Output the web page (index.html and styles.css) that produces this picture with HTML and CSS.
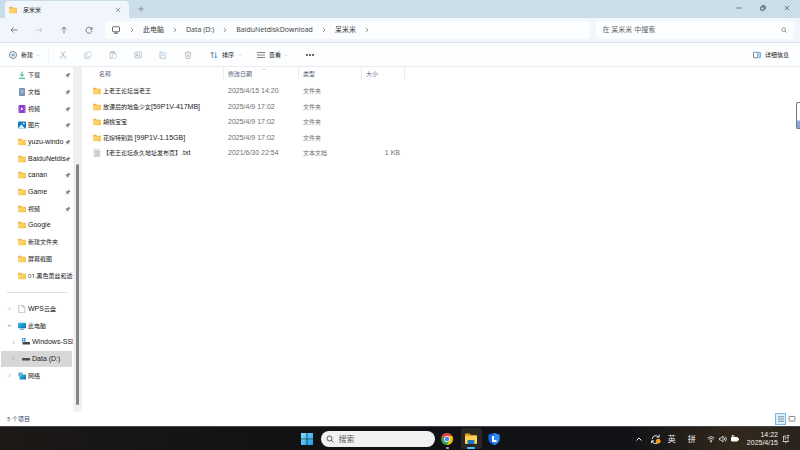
FILE: index.html
```html
<!DOCTYPE html>
<html lang="zh-CN">
<head>
<meta charset="utf-8">
<meta name="viewport" content="width=device-width, initial-scale=1">
<title>呆米米</title>
<link rel="stylesheet" href="styles.css">
</head>
<body>
<svg class="defs" aria-hidden="true">
  <defs>
    <linearGradient id="gFolder" x1="0" y1="0" x2="1" y2="1"><stop offset="0" stop-color="#ffdf83"/><stop offset="1" stop-color="#f6c244"/></linearGradient>
    <linearGradient id="gScreen" x1="0" y1="0" x2="1" y2="1"><stop offset="0" stop-color="#35c3e6"/><stop offset="1" stop-color="#0b6fb0"/></linearGradient>
    <linearGradient id="gWin" x1="0" y1="0" x2="1" y2="1"><stop offset="0" stop-color="#7fe0fb"/><stop offset="1" stop-color="#1c9bea"/></linearGradient>
  </defs>
  <symbol id="folder" viewBox="0 0 16 16"><path d="M0 3Q0 1.500 1.500 1.500H6l2 2h6.500q1.500 0 1.500 1.500V8H0z" fill="#eeb540"/><rect x="0" y="5" width="16" height="9.500" rx="1.200" fill="url(#gFolder)"/></symbol>
  <symbol id="pin" viewBox="0 0 16 16"><path d="M9.500 1.500l5 5-1.500 1-1 .2-2.300 2.300-.2 3-1.500 1.500-3-3L1.500 15 1 14.500l3.500-3.800-3-3L3 6.200l3-.2 2.300-2.300.2-1z" fill="#7d8389"/></symbol>
  <symbol id="chev" viewBox="0 0 16 16"><path d="M5.500 3l5 5-5 5" class="line"/></symbol>
  <symbol id="down" viewBox="0 0 16 16"><path d="M3 6l5 5 5-5" class="line"/></symbol>
  <symbol id="search" viewBox="0 0 16 16"><circle cx="7" cy="7" r="5" class="line"/><path d="M10.700 10.700L15 15" class="line"/></symbol>
  <symbol id="close" viewBox="0 0 16 16"><path d="M2 2l12 12M14 2L2 14" class="line"/></symbol>
</svg>

<div class="window">
  <header class="tabs">
    <div class="tab">
      <svg class="icon"><use href="#folder"/></svg>
      <span class="tab-title">呆米米</span>
      <button class="bare" aria-label="关闭标签页"><svg class="icon-s"><use href="#close"/></svg></button>
    </div>
    <button class="bare add" aria-label="新建标签页"><svg class="icon-s" viewBox="0 0 16 16"><path d="M8 1v14M1 8h14" class="line"/></svg></button>
    <div class="caption">
      <button class="bare" aria-label="最小化"><svg class="icon-s" viewBox="0 0 16 16"><path d="M1 8h14" class="line"/></svg></button>
      <button class="bare" aria-label="还原"><svg class="icon-s" viewBox="0 0 16 16"><rect x="2" y="5" width="9" height="9" rx="1" class="line bold"/><path d="M5 2h6q3 0 3 3v6" class="line bold"/></svg></button>
      <button class="bare" aria-label="关闭"><svg class="icon-s"><use href="#close"/></svg></button>
    </div>
  </header>

  <nav class="navbar">
    <div class="history">
      <button class="bare" aria-label="后退"><svg class="icon" viewBox="0 0 16 16"><path d="M15 8H2M7 3L2 8l5 5" class="line"/></svg></button>
      <button class="bare faint" aria-label="前进"><svg class="icon" viewBox="0 0 16 16"><path d="M1 8h13M9 3l5 5-5 5" class="line"/></svg></button>
      <button class="bare" aria-label="向上"><svg class="icon" viewBox="0 0 16 16"><path d="M8 15V2M3 7l5-5 5 5" class="line"/></svg></button>
      <button class="bare" aria-label="刷新"><svg class="icon" viewBox="0 0 16 16"><path d="M13.500 6A6 6 0 1 0 14 9M14 2v4.500H9.500" class="line"/></svg></button>
    </div>
    <div class="address">
      <svg class="icon monitor" viewBox="0 0 16 16"><rect x="1" y="1.500" width="14" height="10" rx="1.500" class="line"/><path d="M8 12v2.500M4 14.500h8" class="line"/></svg>
      <svg class="icon-s"><use href="#chev"/></svg>
      <a href="#pc">此电脑</a>
      <svg class="icon-s"><use href="#chev"/></svg>
      <a href="#d">Data (D:)</a>
      <svg class="icon-s"><use href="#chev"/></svg>
      <a href="#bd">BaiduNetdiskDownload</a>
      <svg class="icon-s"><use href="#chev"/></svg>
      <a href="#here">呆米米</a>
      <svg class="icon-s"><use href="#chev"/></svg>
    </div>
    <label class="find">
      <input type="text" placeholder="在 呆米米 中搜索" aria-label="在 呆米米 中搜索">
      <svg class="icon-s"><use href="#search"/></svg>
    </label>
  </nav>

  <div class="toolbar">
    <button class="tool new"><svg class="icon" viewBox="0 0 16 16"><circle cx="8" cy="8" r="7" class="line"/><path d="M8 4v8M4 8h8" class="line blue"/></svg>新建<svg class="caret"><use href="#down"/></svg></button>
    <div class="edits">
      <button class="bare" aria-label="剪切"><svg class="icon" viewBox="0 0 16 16"><path d="M4 1l6.500 10M12 1L5.500 11" class="line"/><circle cx="4" cy="12.500" r="2.200" class="line blue"/><circle cx="12" cy="12.500" r="2.200" class="line blue"/></svg></button>
      <button class="bare" aria-label="复制"><svg class="icon" viewBox="0 0 16 16"><rect x="5.500" y="1.500" width="9" height="10" rx="1.500" class="line blue"/><path d="M5 4.500H2.500q-1 0-1 1v8q0 1 1 1h7q1 0 1-1V12" class="line"/></svg></button>
      <button class="bare" aria-label="粘贴"><svg class="icon" viewBox="0 0 16 16"><path d="M6 14.500H2.500v-12h10V6M5 1h5v3H5z" class="line"/><rect x="7" y="6.500" width="7.500" height="8.500" rx="1" class="line blue"/></svg></button>
      <button class="bare" aria-label="重命名"><svg class="icon" viewBox="0 0 16 16"><path d="M9 2.500H2.500q-1 0-1 1v9q0 1 1 1H9M13 2.500h1.500v11H13M4 11l2.500-6L9 11M5 9h3" class="line"/><path d="M11 1v14M9.500 1h3M9.500 15h3" class="line blue"/></svg></button>
      <button class="bare" aria-label="共享"><svg class="icon" viewBox="0 0 16 16"><path d="M7 2.500H2v12h11V11" class="line"/><path d="M10 1.500l5 4.500-5 4V7.500Q6 7.500 5 11q0-6 5-6.500z" class="line blue"/></svg></button>
      <button class="bare" aria-label="删除"><svg class="icon" viewBox="0 0 16 16"><path d="M1.500 3.500h13M6 3V1.500h4V3M3 4l1 11h8l1-11M6.500 7v5M9.500 7v5" class="line"/></svg></button>
    </div>
    <button class="tool sort"><svg class="icon" viewBox="0 0 16 16"><path d="M4.500 14V2M1.500 5l3-3 3 3" class="line"/><path d="M11.500 2v12M8.500 11l3 3 3-3" class="line blue"/></svg>排序<svg class="caret"><use href="#down"/></svg></button>
    <button class="tool view"><svg class="icon" viewBox="0 0 16 16"><path d="M0 3h16M0 8h16M0 13h16" class="line"/></svg>查看<svg class="caret"><use href="#down"/></svg></button>
    <button class="bare more" aria-label="更多"><svg class="icon" viewBox="0 0 16 16"><g fill="#222"><circle cx="2" cy="8" r="1.800"/><circle cx="8" cy="8" r="1.800"/><circle cx="14" cy="8" r="1.800"/></g></svg></button>
    <button class="tool details"><svg class="icon" viewBox="0 0 16 16"><path d="M9 2.500H2.500q-1.500 0-1.500 1.500v8q0 1.500 1.500 1.500H9" class="line"/><rect x="9" y="2.500" width="6" height="11" rx="1.500" fill="#a9d6f5" stroke="#1976c5"/></svg>详细信息</button>
  </div>

  <main class="content">
    <aside class="side">
      <ul class="tree">
        <li><svg class="icon" viewBox="0 0 16 16"><path d="M8 1v9M4 6.500l4 4 4-4M2 14.500h12" fill="none" stroke="#20b487" stroke-width="2"/></svg><a href="#1">下载</a><svg class="pin"><use href="#pin"/></svg></li>
        <li><svg class="icon" viewBox="0 0 16 16"><rect x="2" y="0" width="12" height="16" rx="1.500" fill="#7892ae"/><path d="M5 4h6M5 7h6M5 10h6" stroke="#edf5fc"/></svg><a href="#2">文档</a><svg class="pin"><use href="#pin"/></svg></li>
        <li><svg class="icon" viewBox="0 0 16 16"><rect x="1" y="0" width="14" height="16" rx="1.500" fill="#8b3fd0"/><path d="M3 1v14M13 1v14" stroke="#d2a7f0" stroke-dasharray="1.500 1.500"/><path d="M6 5l5 3-5 3z" fill="#fff"/></svg><a href="#3">视频</a><svg class="pin"><use href="#pin"/></svg></li>
        <li><svg class="icon" viewBox="0 0 16 16"><rect x="0" y="1" width="16" height="14" rx="1.500" fill="#137cc5"/><path d="M1 14l5.500-7 7.500 8H2z" fill="#e5f5ff"/><circle cx="11.500" cy="5" r="1.700" fill="#fff"/></svg><a href="#4">图片</a><svg class="pin"><use href="#pin"/></svg></li>
        <li><svg class="icon"><use href="#folder"/></svg><a href="#5" class="latin">yuzu-windo</a><svg class="pin"><use href="#pin"/></svg></li>
        <li><svg class="icon"><use href="#folder"/></svg><a href="#6" class="latin">BaiduNetdis</a><svg class="pin"><use href="#pin"/></svg></li>
        <li><svg class="icon"><use href="#folder"/></svg><a href="#7" class="latin">canan</a><svg class="pin"><use href="#pin"/></svg></li>
        <li><svg class="icon"><use href="#folder"/></svg><a href="#8" class="latin">Game</a><svg class="pin"><use href="#pin"/></svg></li>
        <li><svg class="icon"><use href="#folder"/></svg><a href="#9">视频</a><svg class="pin"><use href="#pin"/></svg></li>
        <li><svg class="icon"><use href="#folder"/></svg><a href="#10" class="latin">Google</a></li>
        <li><svg class="icon"><use href="#folder"/></svg><a href="#11">新建文件夹</a></li>
        <li><svg class="icon"><use href="#folder"/></svg><a href="#12">屏幕截图</a></li>
        <li class="wide"><svg class="icon"><use href="#folder"/></svg><a href="#13">01.黑色蕾丝和透</a></li>
        <li class="rule" role="separator"></li>
        <li class="node"><svg class="twist"><use href="#chev"/></svg><svg class="icon" viewBox="0 0 16 16"><path d="M1.500.5h8l4 4v11h-12zM9.500.5v4h4" fill="#fff" stroke="#8c8c8c"/></svg><a href="#14"><span class="latin">WPS</span>云盘</a></li>
        <li class="node open"><svg class="twist"><use href="#down"/></svg><svg class="icon" viewBox="0 0 16 16"><rect x="0" y="1.500" width="16" height="11" rx="1" fill="url(#gScreen)"/><path d="M4 14.500h8" stroke="#5792b2" stroke-width="2"/></svg><a href="#15">此电脑</a></li>
        <li class="node deep wide"><svg class="twist"><use href="#chev"/></svg><svg class="icon" viewBox="0 0 16 16"><path d="M0 0h3v3H0zM4 0h3v3H4zM0 4h3v3H0zM4 4h3v3H4z" fill="#1687d0"/><rect x="1" y="8" width="15" height="5" rx="1" fill="#41474c"/></svg><a href="#16" class="latin">Windows-SSD</a></li>
        <li class="node deep selected"><svg class="twist"><use href="#chev"/></svg><svg class="icon" viewBox="0 0 16 16"><rect x="0" y="6" width="16" height="5" rx="1" fill="#4c4f52"/></svg><a href="#17" class="latin">Data (D:)</a></li>
        <li class="node"><svg class="twist"><use href="#chev"/></svg><svg class="icon" viewBox="0 0 16 16"><rect x="3" y="5" width="13" height="10" rx="1" fill="url(#gScreen)"/><circle cx="5" cy="5" r="4.500" fill="#3295c5"/><path d="M.5 5h9M5 .5v9M2 2q3 2 6 0M2 8q3-2 6 0" fill="none" stroke="#b7e6fa" stroke-width=".7"/></svg><a href="#18">网络</a></li>
      </ul>
      <div class="track"><div class="thumb"></div></div>
    </aside>

    <section class="files">
      <table>
        <thead><tr><th class="c-name">名称</th><th class="c-date"><svg class="sorted"><use href="#down"/></svg>修改日期</th><th class="c-type">类型</th><th class="c-size">大小</th></tr></thead>
        <tbody>
          <tr><td class="c-name"><svg class="icon"><use href="#folder"/></svg><span>上老王论坛当老王</span></td><td class="latin">2025/4/15 14:20</td><td>文件夹</td><td></td></tr>
          <tr><td class="c-name"><svg class="icon"><use href="#folder"/></svg><span>放课后的地鱼少女<span class="latin">[59P1V-417MB]</span></span></td><td class="latin">2025/4/9 17:02</td><td>文件夹</td><td></td></tr>
          <tr><td class="c-name"><svg class="icon"><use href="#folder"/></svg><span>胡桃宝宝</span></td><td class="latin">2025/4/9 17:02</td><td>文件夹</td><td></td></tr>
          <tr><td class="c-name"><svg class="icon"><use href="#folder"/></svg><span>花嫁特别篇 <span class="latin">[99P1V-1.15GB]</span></span></td><td class="latin">2025/4/9 17:02</td><td>文件夹</td><td></td></tr>
          <tr><td class="c-name"><svg class="icon" viewBox="0 0 16 16"><path d="M2.500.5h8l3 3v12h-11z" fill="#f1f1f1" stroke="#999"/><path d="M4.500 5h7M4.500 7.500h7M4.500 10h7M4.500 12.500h7" stroke="#8a8a8a"/></svg><span>【老王论坛永久地址发布页】<span class="latin">.txt</span></span></td><td class="latin">2021/6/30 22:54</td><td>文本文档</td><td class="size latin">1 KB</td></tr>
        </tbody>
      </table>
    </section>
  </main>

  <footer class="status">
    <span>5 个项目</span>
    <div class="modes">
      <button class="bare on" aria-label="详细信息视图"><svg class="icon" viewBox="0 0 16 16"><path d="M2 3.500h12M2 8h12M2 12.500h12" stroke="#62737e" stroke-width="1.500"/></svg></button>
      <button class="bare" aria-label="大图标视图"><svg class="icon" viewBox="0 0 16 16"><rect x="2" y="3" width="12" height="9" rx="1" fill="none" stroke="#666" stroke-width="1.500"/></svg></button>
    </div>
  </footer>
  <div class="edge-widget"></div>
</div>

<div class="taskbar">
  <div class="apps">
    <button class="bare" aria-label="开始"><svg class="icon-l" viewBox="0 0 24 24"><path d="M0 0h11.300v11.300H0zM12.700 0H24v11.300H12.700zM0 12.700h11.300V24H0zM12.700 12.700H24V24H12.700z" fill="url(#gWin)"/></svg></button>
    <label class="task-find"><svg class="icon"><use href="#search"/></svg><input type="text" placeholder="搜索" aria-label="搜索"></label>
    <button class="bare app" aria-label="Chrome"><svg class="icon-l" viewBox="0 0 24 24"><circle cx="12" cy="12" r="12" fill="#34a853"/><path d="M1.600 6A12 12 0 0 1 22.400 6H12L6.800 15z" fill="#ea4335"/><path d="M22.400 6A12 12 0 0 1 12 24l5.200-9L12 6z" fill="#fbbc05"/><circle cx="12" cy="12" r="6" fill="#fff"/><circle cx="12" cy="12" r="4.600" fill="#4285f4"/></svg></button>
    <button class="bare app active" aria-label="文件资源管理器"><svg class="icon-l" viewBox="0 0 24 24"><path d="M0 3q0-2 2-2h7l3 3h10q2 0 2 2v5H0z" fill="#e5a020"/><rect y="6" width="24" height="16" rx="1.500" fill="#ffd25a"/><path d="M5 22v-6q0-2 2-2h10q2 0 2 2v6z" fill="#1678b8"/></svg></button>
    <button class="bare" aria-label="电脑管家"><svg class="icon-l" viewBox="0 0 24 24"><path d="M12 0l11 3.500V12q0 8-11 12Q1 20 1 12V3.500z" fill="#176de0"/><path d="M12 0l11 3.500V12q0 8-11 12z" fill="#2e8bf5"/><path d="M10 6v10h7" fill="none" stroke="#fff" stroke-width="4"/></svg></button>
  </div>
  <div class="tray">
    <button class="bare" aria-label="显示隐藏的图标"><svg class="icon" viewBox="0 0 16 16"><path d="M3 11l5-5 5 5" class="line bold"/></svg></button>
    <svg class="icon-m" viewBox="0 0 16 16"><path d="M2 8a5.500 5.500 0 0 1 10-3M13 1v4H9M12 13A5.500 5.500 0 0 1 2 11M1 15v-4h4" class="line"/><circle cx="11.500" cy="11.500" r="3.800" fill="#f59a1b"/></svg>
    <span class="ime">英</span>
    <span class="ime">拼</span>
    <div class="system">
      <svg class="icon" viewBox="0 0 16 16"><path d="M1 6q7-6 14 0M3.300 8.700q4.700-4 9.400 0M5.600 11.300q2.400-2 4.800 0" class="line"/><circle cx="8" cy="13.300" r="1.500" fill="#fff"/></svg>
      <svg class="icon" viewBox="0 0 16 16"><path d="M1 6h3l4-4v12l-4-4H1zM10.500 5.500q2 2.500 0 5M12.700 3q4 5 0 10" class="line"/></svg>
      <svg class="icon" viewBox="0 0 16 16"><rect x="0" y="4" width="14" height="9" rx="1.500" fill="#fff"/><path d="M14 6.500h2v4h-2z" fill="#fff"/><path d="M3 0v5M1 1.500h5v3" class="line"/></svg>
    </div>
    <time class="clock">14:22<br>2025/4/15</time>
    <svg class="icon bell" viewBox="0 0 16 16"><path d="M9 2H3v9L1.500 13h12L12 11V9M6 15h3M10 1h4l-4 5h4M5.500 5h3M5.500 8h3" class="line"/></svg>
  </div>
</div>
</body>
</html>
```

FILE: styles.css
```css
* { box-sizing: border-box; }

body {
  margin: 0;
  height: 100vh;
  display: flex;
  flex-direction: column;
  overflow: hidden;
  font: 6px/10px "Open Sans", "Noto Sans CJK SC", sans-serif;
  color: #202020;
  background: #fff;
}

a { color: inherit; text-decoration: none; }
button, input { font: inherit; color: inherit; }
input { border: 0; padding: 0; background: none; outline: 0; min-width: 0; }
svg { flex: none; display: block; }

.defs { position: absolute; width: 0; height: 0; }
.line { fill: none; stroke: currentColor; stroke-width: 1.5; }
.bold { stroke-width: 2; }
.blue { stroke: #2b83c9; }
.latin { font-family: "Liberation Sans", sans-serif; font-size: 7px; }

.icon { width: 8px; height: 8px; }
.icon-s { width: 6px; height: 6px; }
.icon-m { width: 10px; height: 10px; }
.icon-l { width: 12px; height: 12px; }
.caret { width: 4px; height: 4px; color: #888; }

.bare, .tool {
  display: flex;
  align-items: center;
  justify-content: center;
  padding: 0;
  border: 0;
  background: none;
  white-space: nowrap;
}

.window {
  position: relative;
  flex: 1;
  min-height: 0;
  display: flex;
  flex-direction: column;
}

/* Tab strip */
.tabs {
  display: flex;
  align-items: center;
  height: 18px;
  padding-left: 5px;
  background: #cbdde9;
}
.tab {
  display: flex;
  align-items: center;
  gap: 6px;
  align-self: flex-end;
  width: 124px;
  height: 17px;
  padding: 0 8px 0 4px;
  border-radius: 4px 4px 0 0;
  background: #f0f6fc;
}
.tab-title { flex: 1; }
.add { margin-left: 9px; color: #52616b; }
.tab .icon-s { color: #52616b; }
.caption {
  display: flex;
  gap: 18px;
  margin-left: auto;
  padding: 0 10px 2px 0;
  color: #26333c;
}

/* Navigation */
.navbar {
  display: flex;
  align-items: center;
  height: 25px;
  padding-right: 6px;
  border-bottom: 1px solid #d9e2ec;
  background: #f0f6fc;
  font-size: 7px;
}
.history {
  display: flex;
  gap: 17px;
  width: 105px;
  padding-left: 10px;
  color: #555b61;
}
.faint { color: #b8bec4; }
.address, .find {
  display: flex;
  align-items: center;
  height: 18px;
  border-radius: 3px;
  background: #fbfdff;
}
.address { flex: 1; gap: 8px; padding-left: 7px; color: #3b3b3b; }
.monitor { margin-right: 1px; }
.find { width: 25%; margin-left: 6px; padding: 0 7px; }
.find input { flex: 1; }
.find input::placeholder { color: #606060; opacity: 1; }
.find .icon-s { color: #555; }

/* Commands */
.toolbar {
  display: flex;
  align-items: center;
  height: 24px;
  padding: 0 11px 0 9px;
  border-bottom: 1px solid #e9edf1;
  background: #fdfeff;
}
.tool { gap: 4px; }
.tool .icon { color: #555; }
.new { height: 18px; padding-right: 8px; border-right: 1px solid #f2f4f6; }
.new .caret { margin-left: -1px; }
.edits { display: flex; gap: 17px; margin-left: 10px; opacity: .35; }
.sort { margin-left: 18px; }
.view { margin-left: 15px; }
.view .caret { margin-left: -1px; }
.more { margin-left: 18px; }
.details { margin-left: auto; }

/* Content */
.content { flex: 1; min-height: 0; display: flex; }
.side { display: flex; width: 82px; min-height: 0; }
.tree {
  flex: 1;
  min-width: 0;
  display: grid;
  grid-auto-rows: 1fr;
  margin: 0;
  padding: 0 0 28px;
  list-style: none;
}
.tree li {
  display: flex;
  align-items: center;
  gap: 2px;
  min-width: 0;
  min-height: 0;
  padding: 0 2px 0 18px;
}
.tree a { flex: 1; min-width: 0; white-space: nowrap; }
.tree .wide { padding-right: 0; }
.tree .wide a { overflow: hidden; }
.tree .node { padding-left: 7px; }
.tree .deep { padding-left: 11px; }
.twist { width: 5px; height: 5px; margin-right: 4px; color: #777; }
.open .twist { color: #222; }
.tree .selected { margin: 0 1px; padding-left: 10px; background: #d7d7d7; }
.rule::before { content: ""; flex: 1; height: 1px; margin: 0 3px 0 -11px; background: #dfdfdf; }
.pin { width: 6px; height: 6px; }
.track {
  display: flex;
  justify-content: center;
  width: 9px;
  padding: 97px 0 7px;
  border-radius: 0 0 4px 4px;
  background: #f0f0f0;
}
.thumb { width: 3px; border-radius: 2px; background: #858585; }

.files { flex: 1; min-width: 0; }
table { border-collapse: collapse; table-layout: fixed; width: 323px; }
th, td { padding: 0 0 0 4px; text-align: left; font-weight: 400; white-space: nowrap; }
th { height: 16px; padding-bottom: 2px; color: #56617a; background: linear-gradient(#ececf0, #ececf0) right top / 1px 13px no-repeat; }
td { height: 16px; color: #6e6e6e; }
tr:nth-child(even) td { height: 15px; }
th.c-name { width: 142px; padding-left: 17px; }
th.c-date { position: relative; width: 75px; }
th.c-type { width: 63px; }
td.c-name { display: flex; align-items: center; gap: 2px; padding-left: 11px; color: #202020; }
td.size { padding-right: 5px; text-align: right; }
.sorted { position: absolute; top: 0; left: 50%; width: 4px; height: 4px; }

/* Status bar */
.status {
  display: flex;
  align-items: center;
  justify-content: space-between;
  height: 14px;
  padding: 0 3px 0 7px;
  color: #34486c;
}
.modes { display: flex; }
.modes .bare { width: 11px; height: 12px; }
.modes .on { border: 1px solid #78b8e2; background: #d9effc; }

.edge-widget {
  position: absolute;
  top: 102px;
  right: 0;
  width: 4px;
  height: 27px;
  border: 1px solid #777;
  border-right: 0;
  border-radius: 2px 0 0 2px;
  background: linear-gradient(#fff 65%, #82a9dc 75%);
}

/* Taskbar */
.taskbar {
  display: grid;
  grid-template-columns: 1fr auto 1fr;
  align-items: center;
  height: 24px;
  border-top: 1px solid #44464a;
  color: #f2f2f2;
  background: linear-gradient(90deg, #1c1917, #121214 35%, #101216 78%, #33281c 92%, #29231c);
}
.apps { grid-column: 2; display: flex; align-items: center; }
.task-find {
  display: flex;
  align-items: center;
  gap: 5px;
  width: 114px;
  height: 16px;
  margin: 0 2px 0 8px;
  padding: 0 5px;
  border-radius: 8px;
  color: #292929;
  background: #f1f1f1;
  font-size: 8px;
}
.task-find input { flex: 1; }
.task-find input::placeholder { color: #5b5b5b; opacity: 1; }
.apps .app {
  position: relative;
  width: 21px;
  height: 21px;
  border-radius: 3px;
}
.apps .active { margin: 0 6px 0 3px; background: #2a2725; }
.app::after {
  content: "";
  position: absolute;
  bottom: 0;
  width: 3px;
  height: 2px;
  border-radius: 1px;
  background: #aaa;
}
.active::after { width: 8px; background: #4cc2ff; }
.tray {
  display: flex;
  align-items: center;
  justify-content: flex-end;
  padding-right: 10px;
}
.tray .icon-m { margin-left: 8px; }
.ime { margin-left: 12px; font-size: 8px; }
.icon-m + .ime { margin-left: 7px; }
.system { display: flex; gap: 4px; margin: 0 8px 0 11px; }
.clock { text-align: right; font: 7px/8px "Liberation Sans", sans-serif; }
.bell { margin-left: 4px; }
```
